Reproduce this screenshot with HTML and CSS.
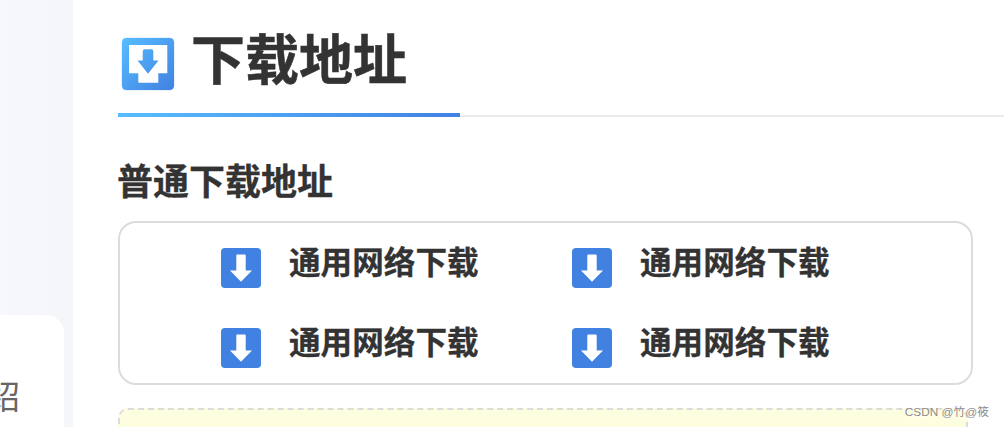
FILE: index.html
```html
<!DOCTYPE html>
<html lang="zh-CN">
<head>
    <meta charset="UTF-8">
    <title>下载地址</title>
    <link rel="stylesheet" href="styles.css">
</head>

<body>
<div class="page">
    <div class="side">
        <div class="side_card">
            <span class="side_text">介绍</span>
        </div>
    </div>

    <div class="main">
        <div class="title">
            <div class="title_inner">
                <svg class="title_icon" viewBox="0 0 52 52">
                    <defs>
                        <linearGradient id="blue" gradientUnits="userSpaceOnUse" x1="0" y1="0" x2="52" y2="52">
                            <stop offset="0" stop-color="#57bdff"/>
                            <stop offset="1" stop-color="#4181e2"/>
                        </linearGradient>
                    </defs>
                    <rect width="52" height="52" rx="4" fill="url(#blue)"/>
                    <path d="M7 7h38.3v28.3h-9v9.4h-20v-9.4H7z" fill="#fff"/>
                    <path d="M22.7 11.3h6.6q2 0 2 2v9.2h5.2L26 35.7 15.5 22.5h5.2v-9.2q0-2 2-2z" fill="url(#blue)"/>
                </svg>
                <h1>下载地址</h1>
            </div>
        </div>

        <h2>普通下载地址</h2>

        <div class="down_box">
            <a class="down_item">
                <svg class="down_icon" viewBox="0 0 40 40"><rect width="40" height="40" rx="4"/><path d="M15.3 7.6q0-1 1-1h7.4q1 0 1 1v14.9H31L20 33.8 9 22.5h6.3z"/></svg>
                <span>通用网络下载</span>
            </a>
            <a class="down_item">
                <svg class="down_icon" viewBox="0 0 40 40"><rect width="40" height="40" rx="4"/><path d="M15.3 7.6q0-1 1-1h7.4q1 0 1 1v14.9H31L20 33.8 9 22.5h6.3z"/></svg>
                <span>通用网络下载</span>
            </a>
            <a class="down_item">
                <svg class="down_icon" viewBox="0 0 40 40"><rect width="40" height="40" rx="4"/><path d="M15.3 7.6q0-1 1-1h7.4q1 0 1 1v14.9H31L20 33.8 9 22.5h6.3z"/></svg>
                <span>通用网络下载</span>
            </a>
            <a class="down_item">
                <svg class="down_icon" viewBox="0 0 40 40"><rect width="40" height="40" rx="4"/><path d="M15.3 7.6q0-1 1-1h7.4q1 0 1 1v14.9H31L20 33.8 9 22.5h6.3z"/></svg>
                <span>通用网络下载</span>
            </a>
        </div>

        <div class="tips"></div>
    </div>

    <div class="watermark">CSDN @竹@筱</div>
</div>
</body>
</html>
```

FILE: styles.css
```css
body{
    margin: 0;
    font-family: "Liberation Sans", "Noto Sans CJK SC", sans-serif;
    color: #333;
}
.page{
    position: relative;
    display: flex;
    width: 1004px;
    height: 427px;
    overflow: hidden;
    background: #fff;
}

/*左侧栏*/
.side{
    width: 73px;
    padding-top: 315px;
    box-sizing: border-box;
    background: linear-gradient(to right, #f7f8fb, #f4f6fa);
}
.side_card{
    display: flex;
    justify-content: flex-end;
    width: 64px;
    height: 160px;
    padding: 59px 44px 0 0;
    box-sizing: border-box;
    background: #fff;
    border-radius: 0 18px 0 0;
}
.side_text{
    font-size: 33px;
    line-height: 48px;
    color: #666;
    white-space: nowrap;
}

/*右侧内容*/
.main{
    flex: 1;
    padding-left: 45px;
}
.title{
    height: 117px;
    box-sizing: border-box;
    border-bottom: 2px solid #e8eaec;
}
.title_inner{
    display: flex;
    width: 342px;
    height: 117px;
    box-sizing: border-box;
    padding-left: 4px;
    border-bottom: 4px solid;
    border-image: linear-gradient(to right, #57bdff, #4181e2) 1;
}
.title_icon{
    width: 52px;
    height: 52px;
    margin: 38px 17px 0 0;
    border-radius: 4px;
    box-shadow: 0 0 2px #a9d2fa;
}
h1{
    margin: 21px 0 0;
    font-size: 54px;
    line-height: 80px;
    -webkit-text-stroke: 0.5px #333;
}
h2{
    margin: 39px 0 11px;
    font-size: 36px;
    line-height: 54px;
    text-indent: -1px;
    -webkit-text-stroke: 0.3px #333;
}

.down_box{
    display: grid;
    grid-template-columns: 351px 351px;
    grid-template-rows: 80px 80px;
    width: 855px;
    height: 164px;
    padding-left: 101px;
    box-sizing: border-box;
    border: 2px solid #dcdcdc;
    border-radius: 18px;
}
.down_item{
    display: flex;
    font-size: 31.6px;
    line-height: 48px;
    font-weight: bold;
    -webkit-text-stroke: 0.3px #333;
}
.down_item span{
    margin-top: 16px;
}
.down_icon{
    width: 40px;
    height: 40px;
    margin: 25px 28px 0 0;
}
.down_icon rect{
    fill: #4181e2;
}
.down_icon path{
    fill: #fff;
}

.tips{
    width: 850px;
    height: 60px;
    margin-top: 23px;
    box-sizing: border-box;
    background: #fdfedf;
    border: 2px dashed #dcdcdc;
    border-radius: 10px;
}

/*右下角水印*/
.watermark{
    position: absolute;
    right: 15px;
    bottom: 6px;
    font-size: 11.8px;
    line-height: 18px;
    color: #8c8c8c;
    text-shadow: 1px 1px 0 #fff;
}
```
